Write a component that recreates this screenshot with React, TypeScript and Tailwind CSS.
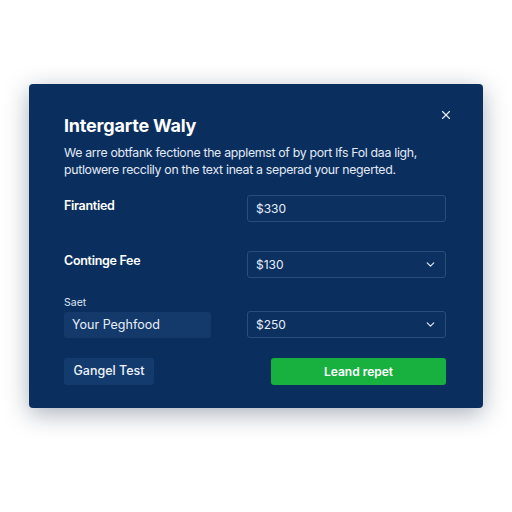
import { X, ChevronDown } from 'lucide-react'

const font = { fontFamily: 'Inter, "Noto Sans", sans-serif' }

function Field({ value, select }: { value: string; select?: boolean }) {
  return (
    <div className="h-[27px] w-[199px] rounded-[3px] border border-[#2a4d7c] bg-[#0c3161] flex items-center justify-between pl-[8px] pr-[8px]">
      <span className="text-[12px] text-[#e8eef8]">{value}</span>
      {select && <ChevronDown size={13} strokeWidth={2.2} className="text-[#dfe8f5]" />}
    </div>
  )
}

export default function App() {
  return (
    <div className="w-[512px] h-[512px] bg-white flex items-start justify-center pt-[84px]" style={font}>
      <div className="relative w-[454px] h-[324px] rounded-[4px] bg-[#0a2f5f] shadow-[0_6px_24px_rgba(10,30,60,0.35)] pl-[35px] pr-[37px] pt-[30px] flex flex-col">
        <button className="absolute top-[24px] right-[30px]">
          <X size={14} strokeWidth={2} className="text-[#e6edf7]" />
        </button>
        <h2 className="text-[18px] font-bold text-white leading-[24px] tracking-[-0.2px]">Intergarte Waly</h2>
        <p className="mt-[6px] text-[12.3px] leading-[17px] text-[#e3eaf5] tracking-[-0.3px]">
          We arre obtfank fectione the applemst of by port lfs Fol daa ligh,
          <br />
          putlowere recclily on the text ineat a seperad your negerted.
        </p>
        <div className="flex items-center justify-between mt-[17px]">
          <span className="text-[12.5px] font-semibold text-white tracking-[-0.3px] -mt-[4px]">Firantied</span>
          <Field value="$330" />
        </div>
        <div className="flex items-center justify-between mt-[29px]">
          <span className="text-[12.5px] font-semibold text-white tracking-[-0.3px] -mt-[7px]">Continge Fee</span>
          <Field value="$130" select />
        </div>
        <div className="flex items-end justify-between mt-[18px]">
          <div className="flex flex-col">
            <span className="text-[10.5px] text-[#dbe4f2] leading-[14px]">Saet</span>
            <div className="mt-[2px] h-[26px] w-[147px] rounded-[3px] bg-[#143a6b] flex items-center pl-[8px]">
              <span className="text-[12.5px] text-[#e8eef8]">Your Peghfood</span>
            </div>
          </div>
          <Field value="$250" select />
        </div>
        <div className="flex items-center justify-between mt-[20px]">
          <button className="h-[27px] w-[90px] rounded-[3px] bg-[#133b6e] text-[12.5px] font-medium text-[#eef3fa]">
            Gangel Test
          </button>
          <button className="h-[27px] w-[175px] rounded-[3px] bg-[#18b03f] text-[12px] font-semibold text-white">
            Leand repet
          </button>
        </div>
      </div>
    </div>
  )
}
